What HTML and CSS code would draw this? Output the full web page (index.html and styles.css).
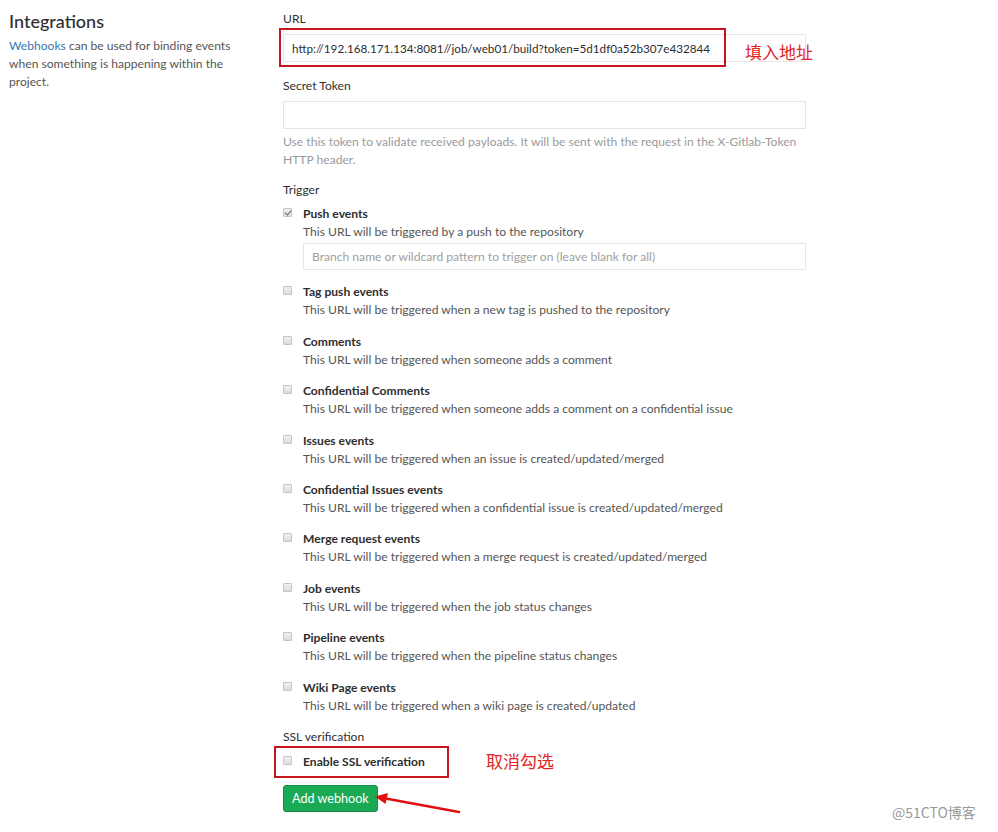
FILE: index.html
```html
<!DOCTYPE html>
<html>
<head>
  <meta charset="UTF-8">
  <title>Integrations</title>
  <link rel="stylesheet" href="styles.css">
</head>
<body>
  <div class="page">
    <div class="sidebar">
      <h4 class="title">Integrations</h4>
      <p class="intro"><a href="#">Webhooks</a> can be used for binding events when something is happening within the project.</p>
    </div>

    <form class="hook-form">
      <label class="label" for="url">URL</label>
      <input class="field url" type="text" id="url" value="http://192.168.171.134:8081//job/web01/build?token=5d1df0a52b307e432844">

      <label class="label gap" for="token">Secret Token</label>
      <input class="field" type="text" id="token">
      <p class="help">Use this token to validate received payloads. It will be sent with the request in the X-Gitlab-Token HTTP header.</p>

      <div class="label trigger">Trigger</div>

      <div class="option">
        <input type="checkbox" class="check" checked>
        <div class="option-body">
          <div class="option-title">Push events</div>
          <div class="option-desc">This URL will be triggered by a push to the repository</div>
          <input class="field branch" type="text" placeholder="Branch name or wildcard pattern to trigger on (leave blank for all)">
        </div>
      </div>

      <div class="option">
        <input type="checkbox" class="check">
        <div class="option-body">
          <div class="option-title">Tag push events</div>
          <div class="option-desc">This URL will be triggered when a new tag is pushed to the repository</div>
        </div>
      </div>

      <div class="option">
        <input type="checkbox" class="check">
        <div class="option-body">
          <div class="option-title">Comments</div>
          <div class="option-desc">This URL will be triggered when someone adds a comment</div>
        </div>
      </div>

      <div class="option">
        <input type="checkbox" class="check">
        <div class="option-body">
          <div class="option-title">Confidential Comments</div>
          <div class="option-desc">This URL will be triggered when someone adds a comment on a confidential issue</div>
        </div>
      </div>

      <div class="option">
        <input type="checkbox" class="check">
        <div class="option-body">
          <div class="option-title">Issues events</div>
          <div class="option-desc">This URL will be triggered when an issue is created/updated/merged</div>
        </div>
      </div>

      <div class="option">
        <input type="checkbox" class="check">
        <div class="option-body">
          <div class="option-title">Confidential Issues events</div>
          <div class="option-desc">This URL will be triggered when a confidential issue is created/updated/merged</div>
        </div>
      </div>

      <div class="option">
        <input type="checkbox" class="check">
        <div class="option-body">
          <div class="option-title">Merge request events</div>
          <div class="option-desc">This URL will be triggered when a merge request is created/updated/merged</div>
        </div>
      </div>

      <div class="option">
        <input type="checkbox" class="check">
        <div class="option-body">
          <div class="option-title">Job events</div>
          <div class="option-desc">This URL will be triggered when the job status changes</div>
        </div>
      </div>

      <div class="option">
        <input type="checkbox" class="check">
        <div class="option-body">
          <div class="option-title">Pipeline events</div>
          <div class="option-desc">This URL will be triggered when the pipeline status changes</div>
        </div>
      </div>

      <div class="option">
        <input type="checkbox" class="check">
        <div class="option-body">
          <div class="option-title">Wiki Page events</div>
          <div class="option-desc">This URL will be triggered when a wiki page is created/updated</div>
        </div>
      </div>

      <div class="label ssl-label">SSL verification</div>
      <div class="option ssl">
        <input type="checkbox" class="check">
        <div class="option-body">
          <div class="option-title">Enable SSL verification</div>
        </div>
      </div>

      <button type="button" class="btn-create">Add webhook</button>
    </form>
  </div>

  <!-- screenshot annotations -->
  <div class="mark mark-url"></div>
  <div class="note note-url">填入地址</div>
  <div class="mark mark-ssl"></div>
  <div class="note note-ssl">取消勾选</div>
  <svg class="arrow" width="90" height="24" viewBox="0 0 90 24">
    <line x1="86" y1="20" x2="10" y2="6" stroke="#e01010" stroke-width="2.5" stroke-linecap="round"/>
    <path d="M2 4.5 L15 1 L12.5 12 Z" fill="#e01010"/>
  </svg>
  <div class="watermark">@51CTO博客</div>
</body>
</html>
```

FILE: styles.css
```css
/* Base */
body, html {
  margin: 0;
  padding: 0;
  background-color: #fff;
  font-family: Lato, "Noto Sans", "Noto Sans CJK SC", sans-serif;
  font-size: 12.1px;
  color: #2e2e2e;
}

.page {
  display: flex;
  padding-top: 10px;
}

/* Left column */
.sidebar {
  width: 274px;
  padding-left: 9px;
  box-sizing: border-box;
}

.title {
  margin: -1px 0 0;
  font-size: 18px;
  font-weight: 500;
  line-height: 24px;
  color: #2e2e2e;
}

.intro {
  margin: 4px 0 0;
  width: 230px;
  line-height: 18px;
  color: #555;
}

.intro a {
  color: #3777b0;
  text-decoration: none;
}

/* Form column */
.hook-form {
  width: 523px;
  margin-left: 9px;
}

.label {
  display: block;
  line-height: 18px;
  margin-bottom: 6px;
  color: #2e2e2e;
}

.label.gap {
  margin-top: 15px;
}

.field {
  display: block;
  width: 100%;
  height: 28px;
  box-sizing: border-box;
  margin: 0;
  padding: 0 8px;
  border: 1px solid #e5e5e5;
  border-radius: 0;
  font-family: inherit;
  font-size: 12.1px;
  color: #2e2e2e;
  background: #fff;
  outline: none;
}

.field.url {
  font-size: 11.7px;
}

.field::placeholder {
  color: #a0a0a0;
}

.help {
  margin: 4px 0 0;
  width: 515px;
  line-height: 17.5px;
  color: #9a9a9a;
}

.trigger {
  margin-top: 13px;
}

/* Trigger options */
.option {
  display: flex;
  margin-bottom: 13.4px;
}

.check {
  -webkit-appearance: none;
  appearance: none;
  flex: none;
  width: 9px;
  height: 9px;
  margin: 3px 11px 0 0;
  border: 1px solid #c4c4c4;
  border-radius: 1px;
  background: linear-gradient(#f0f0f0, #dcdcdc);
  position: relative;
}

.check:checked::after {
  content: "";
  position: absolute;
  left: 2px;
  top: 0;
  width: 3px;
  height: 5px;
  border: solid #666;
  border-width: 0 1.5px 1.5px 0;
  transform: rotate(40deg);
}

.option-body {
  flex: 1;
}

.option-title {
  font-weight: 700;
  line-height: 18px;
}

.option-desc {
  line-height: 18px;
  color: #555;
}

.branch {
  margin-top: 2px;
  height: 27px;
}

.ssl-label {
  margin-top: 0;
  margin-bottom: 7px;
}

.option.ssl {
  margin-bottom: 14px;
}

/* Submit button */
.btn-create {
  display: block;
  height: 27px;
  padding: 0 8px;
  font-family: inherit;
  font-size: 12.6px;
  color: #fff;
  background-color: #1aaa55;
  border: 1px solid #168f48;
  border-radius: 3px;
  cursor: pointer;
}

/* Annotations drawn over the screenshot */
.mark {
  position: absolute;
  border: 2px solid #c4161c;
  box-sizing: border-box;
}

.mark-url {
  left: 279px;
  top: 28px;
  width: 447px;
  height: 39px;
}

.mark-ssl {
  left: 274px;
  top: 746px;
  width: 175px;
  height: 32px;
}

.note {
  position: absolute;
  font-family: "Noto Sans CJK SC", sans-serif;
  font-size: 17px;
  line-height: 22px;
  color: #e02424;
}

.note-url {
  left: 745px;
  top: 41px;
}

.note-ssl {
  left: 486px;
  top: 750px;
}

.arrow {
  position: absolute;
  left: 373px;
  top: 792px;
}

.watermark {
  position: absolute;
  left: 892px;
  top: 803px;
  font-family: "Noto Sans CJK SC", sans-serif;
  font-size: 14px;
  line-height: 18px;
  color: #9a9a9a;
}
```
